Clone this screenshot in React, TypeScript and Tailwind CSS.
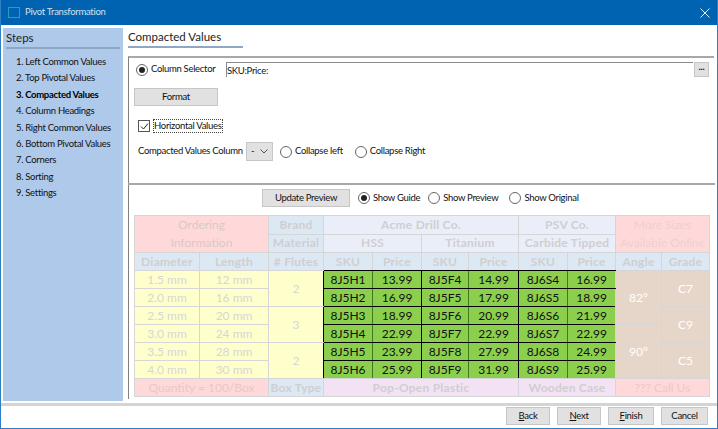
const steps = [
  "1. Left Common Values",
  "2. Top Pivotal Values",
  "3. Compacted Values",
  "4. Column Headings",
  "5. Right Common Values",
  "6. Bottom Pivotal Values",
  "7. Corners",
  "8. Sorting",
  "9. Settings",
];

const colWidths = ["w-[65px]", "w-[69px]", "w-[55px]", "w-[49px]", "w-[49px]", "w-[47px]", "w-[50px]", "w-[49px]", "w-[48px]", "w-[46px]", "w-[48px]"];

const rows = [
  ["1.5 mm", "12 mm", "8J5H1", "13.99", "8J5F4", "14.99", "8J6S4", "16.99"],
  ["2.0 mm", "16 mm", "8J5H2", "16.99", "8J5F5", "17.99", "8J6S5", "18.99"],
  ["2.5 mm", "20 mm", "8J5H3", "18.99", "8J5F6", "20.99", "8J6S6", "21.99"],
  ["3.0 mm", "24 mm", "8J5H4", "22.99", "8J5F7", "22.99", "8J6S7", "22.99"],
  ["3.5 mm", "28 mm", "8J5H5", "23.99", "8J5F8", "27.99", "8J6S8", "24.99"],
  ["4.0 mm", "30 mm", "8J5H6", "25.99", "8J5F9", "31.99", "8J6S9", "25.99"],
];

function Radio({ checked, label }: { checked?: boolean; label: string }) {
  return (
    <span className="flex items-center gap-[3px] whitespace-nowrap text-[#111]">
      <span className="flex h-[12px] w-[12px] shrink-0 items-center justify-center rounded-full border border-[#666] bg-white">
        {checked && <span className="h-[6px] w-[6px] rounded-full bg-[#222]" />}
      </span>
      {label}
    </span>
  );
}

function Btn({ label, className }: { label: React.ReactNode; className: string }) {
  return (
    <button className={`flex h-[18px] items-center justify-center border border-[#c6c6c6] bg-[#e1e1e1] text-[#111] ${className}`}>
      {label}
    </button>
  );
}

const cell = "h-[18px] border border-[#d6d6d6] p-0 text-center text-[12px] leading-none tracking-normal whitespace-nowrap";
const head = `${cell} font-bold !tracking-[0.25px] text-[#cfcfcf]`;
const plain = `${cell} text-[#d6d6d6]`;
const tan = `${cell} bg-[#e6d6c9] text-white`;
const green = "h-[18px] border border-black bg-[#8ccf4d] p-0 text-center text-[12px] leading-none tracking-normal text-[#111]";

export default function App() {
  return (
    <div className="flex h-[429px] w-[718px] flex-col overflow-hidden border-x border-b border-[#2f7fc4] bg-white font-['Lato','Liberation_Sans',sans-serif] text-[9.5px] tracking-[-0.3px]">
      {/* Title bar */}
      <div className="flex h-[25px] shrink-0 items-center bg-[#0063b1] pl-[7px] pr-[7px]">
        <span className="h-[11px] w-[12px] border border-[#2a9db5]" />
        <span className="ml-[5px] text-[#cfe0f0]">Pivot Transformation</span>
        <svg className="ml-auto h-[10px] w-[10px]" viewBox="0 0 10 10" fill="none" stroke="#e8f0f8" strokeWidth="1">
          <path d="M0.5 0.5L9.5 9.5M9.5 0.5L0.5 9.5" />
        </svg>
      </div>

      <div className="flex min-h-0 flex-1">
        {/* Steps sidebar */}
        <div className="mb-[2px] ml-[2px] mt-[3px] w-[120px] shrink-0 bg-[#aec9ea]">
          <div className="mx-[3px] h-[21px] border-b-2 border-[#8fa6c4] text-[11.5px] leading-[20px] tracking-normal text-[#222]">Steps</div>
          <ul className="mt-[5px] pl-[13px] leading-[16.4px] text-[#111]">
            {steps.map((s, i) => (
              <li key={s} className={i === 2 ? "font-bold text-black" : ""}>{s}</li>
            ))}
          </ul>
        </div>

        {/* Main */}
        <div className="ml-[5px] flex min-w-0 flex-1 flex-col">
          <div className="h-[31px]">
            <span className="mt-[2px] inline-block h-[21px] w-[115px] border-b-2 border-[#8fa6c4] text-[11.5px] leading-[20px] tracking-normal text-[#222]">Compacted Values</span>
          </div>

          {/* Selector panel */}
          <div className="mr-[3px] h-[127px] border-l border-t-2 border-l-[#808080] border-t-[#a8a8a8] pl-[7px] pt-[4px]">
            <div className="flex h-[15px] items-center">
              <span className="w-[90px]"><Radio checked label="Column Selector" /></span>
              <div className="h-[15px] w-[467px] border-l border-t border-[#8a8a8a] leading-[15px] text-[#111]">SKU:Price:</div>
              <Btn label={<span className="-mt-1 font-bold">...</span>} className="ml-[1px] !h-[15px] w-[15px]" />
            </div>
            <Btn label="Format" className="-ml-[2px] mt-[11px] w-[84px]" />
            <div className="ml-[2px] mt-[13px] flex items-center gap-[3px] text-[#111]">
              <span className="flex h-[12px] w-[12px] items-center justify-center border border-[#555]">
                <svg className="h-[9px] w-[9px]" viewBox="0 0 9 9" fill="none" stroke="#222" strokeWidth="1">
                  <path d="M1 4.5L3.5 7L8 1.5" />
                </svg>
              </span>
              <span className="border border-dotted border-[#444] leading-[12px]">Horizontal Values</span>
            </div>
            <div className="ml-[2px] mt-[9px] flex items-center text-[#111]">
              <span className="w-[108px] whitespace-nowrap">Compacted Values Column</span>
              <span className="flex h-[19px] w-[27px] items-center justify-between border border-[#c6c6c6] bg-[#e1e1e1] px-[4px]">
                -
                <svg className="h-[5px] w-[8px]" viewBox="0 0 8 5" fill="none" stroke="#555"><path d="M0.5 0.5L4 4L7.5 0.5" /></svg>
              </span>
              <span className="ml-[7px]"><Radio label="Collapse left" /></span>
              <span className="ml-[12px]"><Radio label="Collapse Right" /></span>
            </div>
          </div>

          {/* Preview panel */}
          <div className="mr-[2px] min-h-0 flex-1 border-t-2 border-t-[#a8a8a8]">
            <div className="mb-[3px] h-[214px] border-l border-l-[#808080] pl-[5px] pt-[4px]">
              <div className="flex items-center pl-[128px]">
                <Btn label="Update Preview" className="w-[88px]" />
                <span className="ml-[8px]"><Radio checked label="Show Guide" /></span>
                <span className="ml-[8px]"><Radio label="Show Preview" /></span>
                <span className="ml-[11px]"><Radio label="Show Original" /></span>
              </div>
              <table className="mt-[8px] w-[575px] table-fixed border-collapse">
                <colgroup>
                  {colWidths.map((w, i) => <col key={i} className={w} />)}
                </colgroup>
                <tbody>
                  <tr>
                    <td colSpan={2} rowSpan={2} className={`${plain} bg-[#ffd9d9] !leading-[18px] !text-[#d9c8c8]`}>Ordering<br />Information</td>
                    <td className={`${head} bg-[#dde8f5]`}>Brand</td>
                    <td colSpan={4} className={`${head} bg-[#e9eef9]`}>Acme Drill Co.</td>
                    <td colSpan={2} className={`${head} bg-[#e9eef9]`}>PSV Co.</td>
                    <td colSpan={2} rowSpan={2} className={`${plain} bg-[#ffd9d9] !leading-[18px] !text-[#ecd0d0]`}>More Sizes<br />Available Online</td>
                  </tr>
                  <tr>
                    <td className={`${head} bg-[#dde8f5]`}>Material</td>
                    <td colSpan={2} className={`${head} bg-[#e9eef9]`}>HSS</td>
                    <td colSpan={2} className={`${head} bg-[#e9eef9]`}>Titanium</td>
                    <td colSpan={2} className={`${head} bg-[#e9eef9]`}>Carbide Tipped</td>
                  </tr>
                  <tr>
                    {["Diameter", "Length", "# Flutes", "SKU", "Price", "SKU", "Price", "SKU", "Price", "Angle", "Grade"].map((h, i) => (
                      <td key={i} className={`${head} bg-[#dde8f5] ${i >= 3 && i <= 8 ? "border-b-black" : ""}`}>{h}</td>
                    ))}
                  </tr>
                  {rows.map((r, i) => (
                    <tr key={i}>
                      <td className={`${plain} bg-[#ffffcc]`}>{r[0]}</td>
                      <td className={`${plain} bg-[#ffffcc]`}>{r[1]}</td>
                      {i % 2 === 0 && (
                        <td rowSpan={2} className={`${plain} border-r-black bg-[#ffffcc]`}>{[2, 3, 2][i / 2]}</td>
                      )}
                      {r.slice(2).map((v, j) => (
                        <td key={j} className={`${green} ${j % 2 === 0 ? "border-r-[#3f7a1f]" : ""} ${i === 5 ? "border-b-[#d6d6d6]" : ""} ${j === 5 ? "border-r-[#d6d6d6]" : ""}`}>{v}</td>
                      ))}
                      {i === 0 && <td rowSpan={3} className={tan}>82°</td>}
                      {i === 3 && <td rowSpan={3} className={tan}>90°</td>}
                      {i === 0 && <td rowSpan={2} className={tan}>C7</td>}
                      {i === 2 && <td rowSpan={2} className={tan}>C9</td>}
                      {i === 4 && <td rowSpan={2} className={tan}>C5</td>}
                    </tr>
                  ))}
                  <tr>
                    <td colSpan={2} className={`${plain} bg-[#ffd9d9] !text-[#e6c8c8]`}>Quantity = 100/Box</td>
                    <td className={`${head} bg-[#dde8f5]`}>Box Type</td>
                    <td colSpan={4} className={`${head} bg-[#f3e2f3]`}>Pop-Open Plastic</td>
                    <td colSpan={2} className={`${head} bg-[#f3e2f3]`}>Wooden Case</td>
                    <td colSpan={2} className={`${plain} bg-[#ffd9d9] !text-[#eec8c8]`}>??? Call Us</td>
                  </tr>
                </tbody>
              </table>
            </div>
          </div>
        </div>
      </div>

      {/* Footer */}
      <div className="h-[25px] shrink-0 border-t-[3px] border-[#d4d4d4]">
        <div className="flex justify-end gap-[7px] pr-[9px] pt-[1px]">
          <Btn label={<span><u>B</u>ack</span>} className="w-[44px]" />
          <Btn label={<span><u>N</u>ext</span>} className="w-[44px]" />
          <Btn label={<span><u>F</u>inish</span>} className="w-[46px]" />
          <Btn label="Cancel" className="w-[47px]" />
        </div>
      </div>
    </div>
  );
}
